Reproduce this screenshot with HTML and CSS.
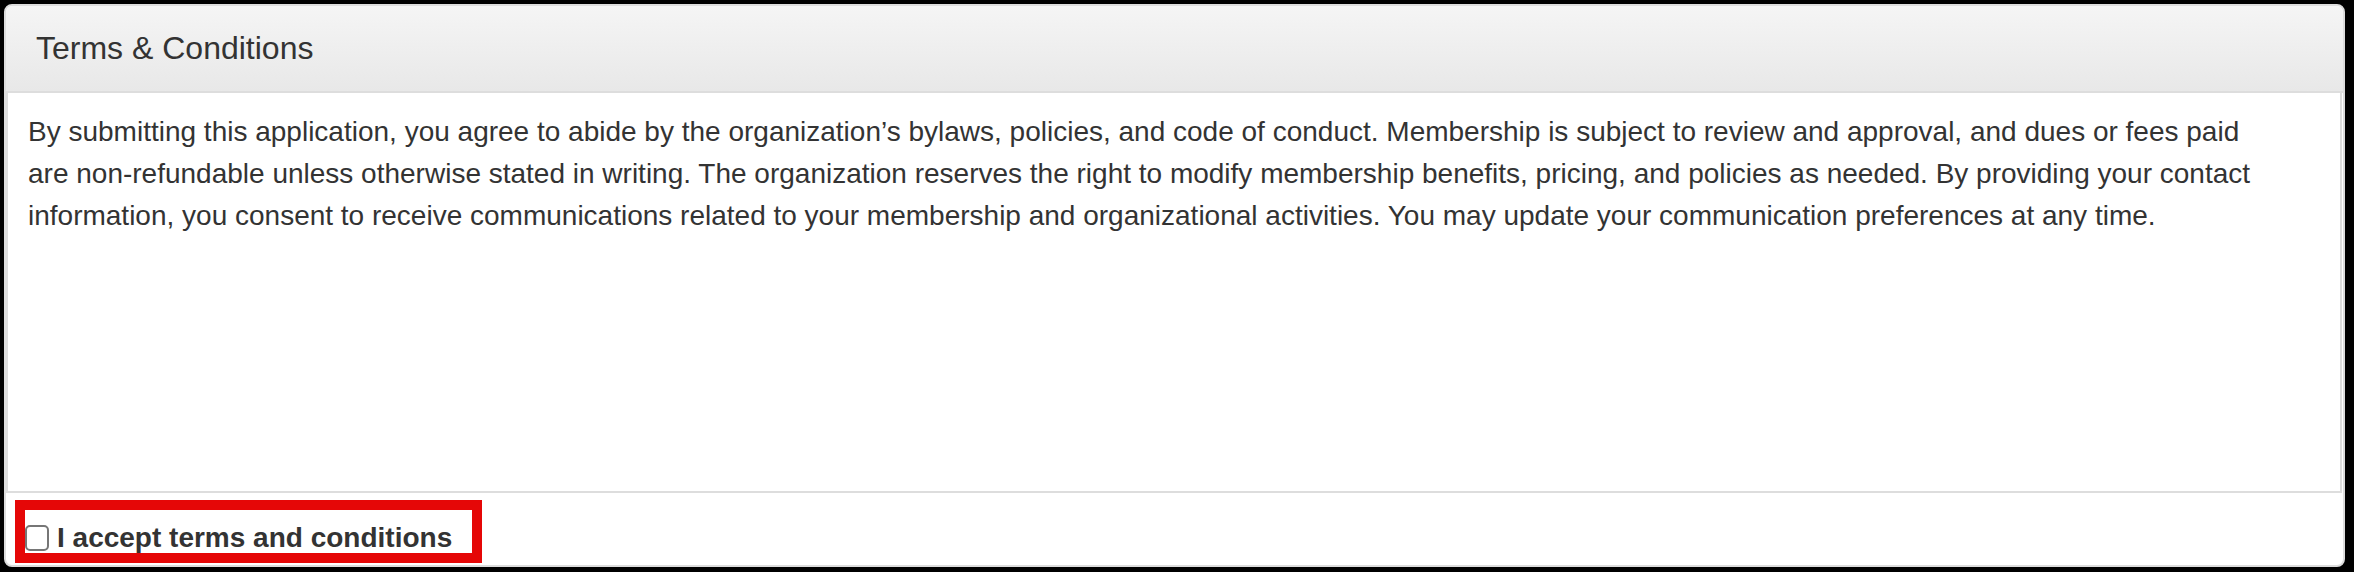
FILE: index.html
```html
<!DOCTYPE html>
<html>

<head>
    <title>Terms &amp; Conditions</title>
    <link rel="stylesheet" href="styles.css">
</head>

<body>
    <div class="panel">
        <div class="panel-heading">
            <div class="panel-title">Terms &amp; Conditions</div>
        </div>
        <div class="terms-box">
            <p>By submitting this application, you agree to abide by the organization’s bylaws, policies, and code of conduct. Membership is subject to review and approval, and dues or fees paid are non-refundable unless otherwise stated in writing. The organization reserves the right to modify membership benefits, pricing, and policies as needed. By providing your contact information, you consent to receive communications related to your membership and organizational activities. You may update your communication preferences at any time.</p>
        </div>
        <div class="panel-footer">
            <label class="accept highlight">
                <input type="checkbox" id="accept">
                <span>I accept terms and conditions</span>
            </label>
        </div>
    </div>
</body>

</html>
```

FILE: styles.css
```css
html,
body {
    margin: 0;
    height: 100%;
}

body {
    background-color: #000;
    padding: 4px 9px 5px 4px;
    box-sizing: border-box;
    font-family: "Liberation Sans", Arial, Helvetica, sans-serif;
    color: #333;
}

.panel {
    background-color: #fff;
    border: 2px solid #ddd;
    border-radius: 8px;
    overflow: hidden;
}

.panel-heading {
    padding: 20px 30px;
    background-image: linear-gradient(to bottom, #f5f5f5 0%, #e8e8e8 100%);
    border-bottom: 2px solid #ddd;
}

.panel-title {
    font-size: 32px;
    line-height: 45px;
}

.terms-box {
    height: 400px;
    box-sizing: border-box;
    overflow: auto;
    border: 2px solid #ddd;
    border-top: none;
    margin-right: 1px;
    padding: 18px 62px 20px 20px;
}

.terms-box p {
    margin: 0;
    font-size: 28px;
    line-height: 42px;
}

.panel-footer {
    height: 72px;
    box-sizing: border-box;
    padding: 7px 0 0 9px;
}

.accept {
    display: inline-flex;
    align-items: center;
    font-size: 28px;
    font-weight: bold;
    line-height: 31px;
    padding: 12px 20px 0 0;
    cursor: pointer;
}

.accept input {
    appearance: none;
    -webkit-appearance: none;
    width: 24px;
    height: 26px;
    margin: 0 8px 0 0;
    border: 2px solid #767676;
    border-radius: 5px;
    box-sizing: border-box;
    background-color: #fff;
}

.accept input:checked {
    background-color: #0075ff;
    border-color: #0075ff;
}

.highlight {
    border: 10px solid #e50707;
}
```
